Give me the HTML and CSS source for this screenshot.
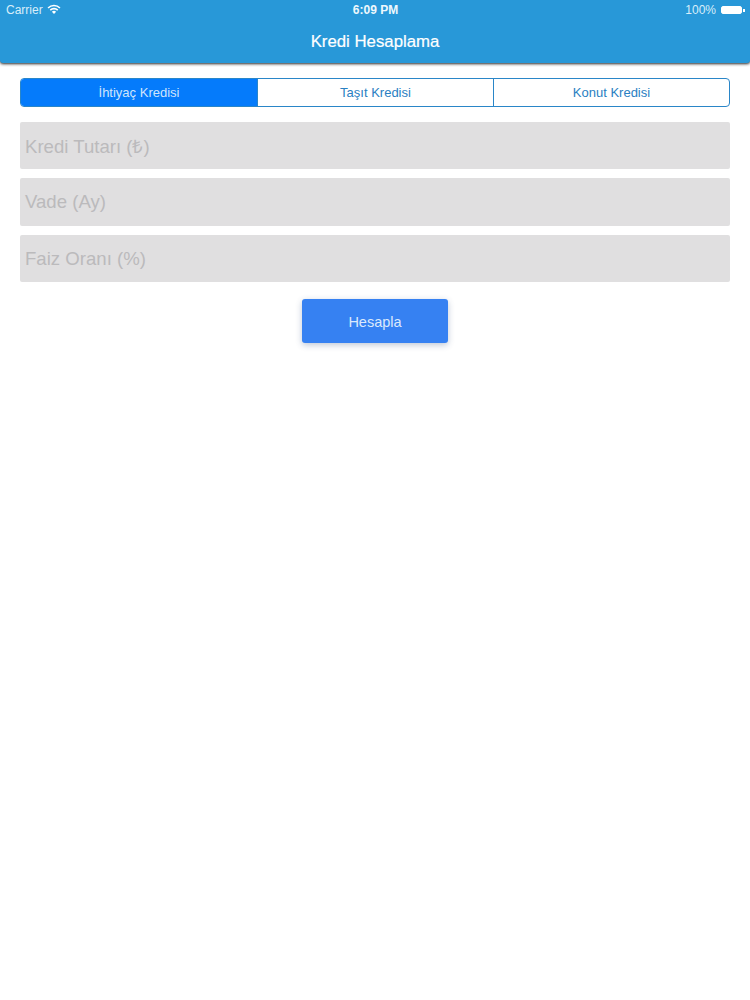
FILE: index.html
```html
<!DOCTYPE html>
<html lang="tr">
<head>
<meta charset="utf-8">
<title>Kredi Hesaplama</title>
<link rel="stylesheet" href="styles.css">
</head>
<body>
<header class="header">
  <div class="status">
    <div class="status-left">
      <span>Carrier</span>
      <svg class="wifi" viewBox="0 0 14 10" width="14" height="10" aria-hidden="true">
        <path d="M0.5 3.4A9.2 9.2 0 0 1 13.5 3.4L12.4 4.6A7.6 7.6 0 0 0 1.6 4.6Z" fill="#fff"/>
        <path d="M2.7 5.6A6.1 6.1 0 0 1 11.3 5.6L10.2 6.8A4.5 4.5 0 0 0 3.8 6.8Z" fill="#fff"/>
        <path d="M4.9 7.8A3 3 0 0 1 9.1 7.8L7 10Z" fill="#fff"/>
      </svg>
    </div>
    <div class="status-time">6:09 PM</div>
    <div class="status-right">
      <span>100%</span>
      <span class="battery"><span class="battery-fill"></span></span>
      <span class="battery-tip"></span>
    </div>
  </div>
  <h1 class="title">Kredi Hesaplama</h1>
</header>
<main class="content">
  <div class="segments">
    <div class="segment active">İhtiyaç Kredisi</div>
    <div class="segment">Taşıt Kredisi</div>
    <div class="segment">Konut Kredisi</div>
  </div>
  <div class="fields">
    <div class="field">Kredi Tutarı (₺)</div>
    <div class="field">Vade (Ay)</div>
    <div class="field">Faiz Oranı (%)</div>
  </div>
  <div class="actions">
    <button class="button" type="button">Hesapla</button>
  </div>
</main>
</body>
</html>
```
FILE: styles.css
```css
* { box-sizing: border-box; }
html, body { margin: 0; padding: 0; }
body {
  width: 750px;
  height: 1000px;
  background: #fff;
  font-family: "Liberation Sans", Arial, sans-serif;
  overflow: hidden;
}
.header {
  height: 63px;
  background: #2898d8;
  color: #fff;
  box-shadow: 0 1px 3px rgba(0, 0, 0, 0.85);
  border-radius: 0 0 3px 3px;
}
.status {
  height: 20px;
  padding: 0 5px 0 6px;
  display: grid;
  grid-template-columns: 1fr auto 1fr;
  align-items: center;
  font-size: 12px;
}
.status-left { display: flex; align-items: center; gap: 4px; color: #d8eefa; }
.wifi { display: block; margin-top: -2px; }
.status-time { font-weight: 700; font-size: 12px; color: #eef8fd; }
.status-right { display: flex; align-items: center; justify-content: flex-end; color: #d8eefa; }
.battery {
  margin-left: 5px;
  width: 21px;
  height: 8px;
  border: 1px solid #fff;
  border-radius: 2px;
  display: block;
}
.battery-fill { display: block; height: 100%; background: #fff; }
.battery-tip { width: 2px; height: 3px; background: #fff; margin-left: 1px; }
.title {
  margin: 0;
  height: 43px;
  line-height: 43px;
  text-align: center;
  font-size: 16.8px;
  font-weight: 400;
  -webkit-text-stroke: 0.2px #fff;
}
.content { padding: 15px 20px 0; }
.segments {
  display: grid;
  grid-template-columns: repeat(3, 1fr);
  height: 28.5px;
  border: 1.5px solid #2a86c8;
  border-radius: 4px;
  overflow: hidden;
}
.segment {
  display: flex;
  align-items: center;
  justify-content: center;
  font-size: 13px;
  color: #2a80c2;
  border-left: 1.5px solid #2a86c8;
}
.segment:first-child { border-left: 0; }
.segment.active { background: #057bfb; color: #cfe5fb; }
.fields {
  margin-top: 15px;
  display: flex;
  flex-direction: column;
  gap: 9px;
}
.field {
  height: 47.5px;
  padding: 1px 0 0 5px;
  display: flex;
  align-items: center;
  background: #e0dfe0;
  border-radius: 2px;
  color: #bbbabc;
  font-size: 18.6px;
}
.actions {
  margin-top: 17px;
  display: flex;
  justify-content: center;
}
.button {
  width: 146px;
  height: 44px;
  padding: 1px 0 0;
  border: 0;
  border-radius: 3px;
  background: #3681f2;
  color: #dbe9fc;
  font-family: inherit;
  font-size: 14.5px;
  box-shadow: 0 2px 6px rgba(40, 70, 120, 0.3);
}
```
